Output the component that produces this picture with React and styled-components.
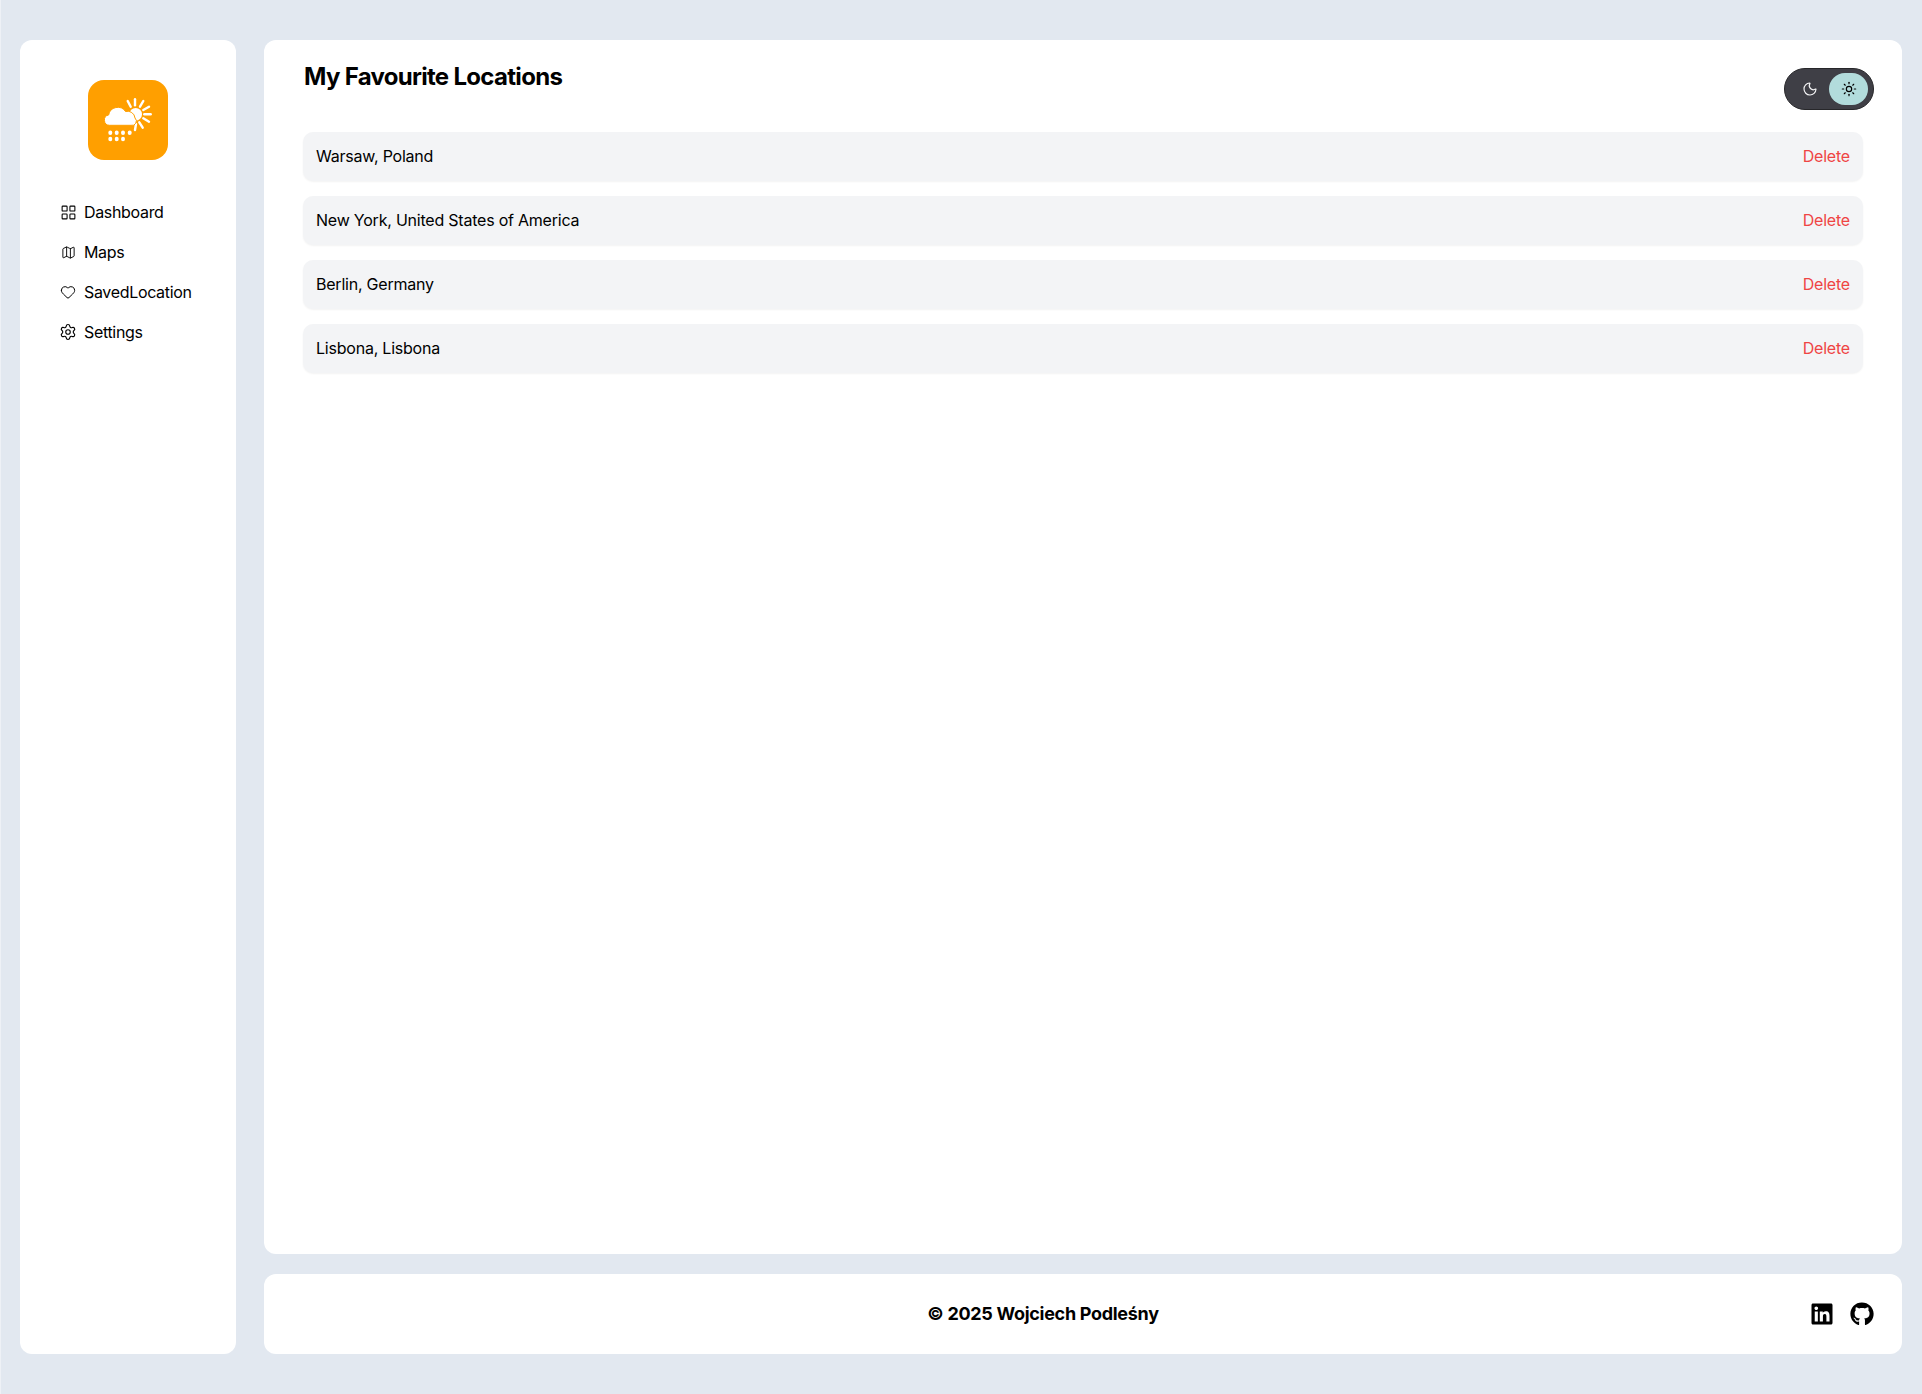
import React from "react";
import styled, { createGlobalStyle } from "styled-components";
import { LayoutGrid, Map, Heart, Settings, Moon, Sun } from "lucide-react";
import { FaGithub, FaLinkedin } from "react-icons/fa";

const GlobalStyle = createGlobalStyle`
  * { box-sizing: border-box; }
  body {
    margin: 0;
    background: #e2e8f0;
    font-family: Inter, "Noto Sans", sans-serif;
    color: #000;
  }
`;

const Page = styled.div`
  display: grid;
  grid-template-columns: 216px 1fr;
  column-gap: 28px;
  height: 1394px;
  padding: 40px 20px;
  box-shadow: inset 1px 0 0 #eef1f6;
`;

const Sidebar = styled.aside`
  display: flex;
  flex-direction: column;
  align-items: center;
  padding-top: 40px;
  background: #fff;
  border-radius: 12px;
`;

const Logo = styled.div`
  width: 80px;
  height: 80px;
  border-radius: 16px;
  background: #ff9f00;
  display: flex;
`;

const Nav = styled.nav`
  align-self: stretch;
  display: flex;
  flex-direction: column;
  gap: 16px;
  margin-top: 40px;
  padding-left: 39px;
`;

const NavItem = styled.a`
  display: flex;
  align-items: center;
  gap: 7px;
  height: 24px;
  font-size: 16px;
  line-height: 24px;
  letter-spacing: -0.33px;
  color: #000;
`;

const NavIcon = styled.span`
  width: 18px;
  display: flex;
  align-items: center;
  justify-content: center;
`;

const Column = styled.div`
  display: flex;
  flex-direction: column;
  gap: 20px;
  min-width: 0;
`;

const Main = styled.main`
  position: relative;
  flex: 1;
  padding: 21px 40px 20px;
  background: #fff;
  border-radius: 12px;
`;

const Title = styled.h1`
  margin: 0 0 39px;
  font-size: 24px;
  line-height: 32px;
  font-weight: 700;
  letter-spacing: -0.7px;
`;

const List = styled.ul`
  list-style: none;
  margin: 0 -1px;
  padding: 0;
  display: flex;
  flex-direction: column;
  gap: 15px;
`;

const Row = styled.li`
  display: flex;
  align-items: center;
  justify-content: space-between;
  height: 49px;
  padding: 0 13px 2px;
  background: #f3f4f6;
  border-radius: 10px;
  box-shadow: 0 1px 2px rgba(0, 0, 0, 0.05);
  font-size: 16px;
  letter-spacing: -0.22px;
`;

const DeleteButton = styled.button`
  border: 0;
  padding: 0;
  background: none;
  color: #ef4444;
  font: inherit;
  letter-spacing: -0.2px;
`;

const Toggle = styled.div`
  position: absolute;
  top: 28px;
  right: 28px;
  width: 90px;
  height: 42px;
  display: flex;
  align-items: center;
  padding: 0 5px;
  background: #3f3f46;
  border: 1px solid #27272a;
  border-radius: 21px;
`;

const ToggleSide = styled.span`
  width: 40px;
  height: 32px;
  display: flex;
  align-items: center;
  justify-content: center;
  border-radius: 16px;
  background: ${(p) => (p.$active ? "#b2dcdc" : "transparent")};
  color: ${(p) => (p.$active ? "#000" : "#f4f4f5")};
  margin-left: ${(p) => (p.$active ? "auto" : "0")};
`;

const Footer = styled.footer`
  position: relative;
  height: 80px;
  display: flex;
  align-items: center;
  justify-content: center;
  padding: 0 80px 2px 0;
  background: #fff;
  border-radius: 12px;
  font-size: 18px;
  font-weight: 700;
  letter-spacing: -0.3px;
`;

const Socials = styled.div`
  position: absolute;
  right: 28px;
  top: 28px;
  display: flex;
  align-items: center;
  gap: 16px;
  color: #000;
`;

const rays = [
  "M39.7 21l3 5.7",
  "M47 19.3v6",
  "M55.3 21l-3.3 5.7",
  "M61 26.7l-5.7 3.3",
  "M62.7 34.3h-6.4",
  "M61 41.7l-5.7-3.4",
  "M54.7 47.7l-3.4-5.4",
  "M47 50l1-6",
];

const WeatherLogo = () => (
  <svg width="80" height="80" viewBox="0 0 80 80" fill="#fff">
    <g stroke="#fff" strokeWidth="2.4" strokeLinecap="round" fill="none">
      {rays.map((d) => (
        <path key={d} d={d} />
      ))}
    </g>
    <circle cx="47.7" cy="34.3" r="6.3" />
    <path
      d="M21.5 45.3A5.2 5.2 0 0 1 20.6 35 9.3 9.3 0 0 1 37.5 31.5 7.5 7.5 0 0 1 47 38 4.3 4.3 0 0 1 43 45.3z"
      stroke="#ff9f00"
      strokeWidth="1"
    />
    {[22.3, 28.7, 35, 41.7].map((x) => (
      <ellipse key={x} cx={x} cy="52.7" rx="2" ry="2.2" />
    ))}
    {[22.3, 28.7, 35].map((x) => (
      <ellipse key={x} cx={x} cy="59" rx="2" ry="2.2" />
    ))}
  </svg>
);

const navItems = [
  { label: "Dashboard", icon: LayoutGrid, size: 17 },
  { label: "Maps", icon: Map, size: 15 },
  { label: "SavedLocation", icon: Heart, size: 16 },
  { label: "Settings", icon: Settings, size: 18 },
];

const locations = [
  "Warsaw, Poland",
  "New York, United States of America",
  "Berlin, Germany",
  "Lisbona, Lisbona",
];

export default function App() {
  return (
    <>
      <GlobalStyle />
      <Page>
        <Sidebar>
          <Logo>
            <WeatherLogo />
          </Logo>
          <Nav>
            {navItems.map(({ label, icon: Icon, size }) => (
              <NavItem key={label}>
                <NavIcon>
                  <Icon size={size} strokeWidth={1.5} />
                </NavIcon>
                {label}
              </NavItem>
            ))}
          </Nav>
        </Sidebar>
        <Column>
          <Main>
            <Title>My Favourite Locations</Title>
            <Toggle>
              <ToggleSide>
                <Moon size={16} strokeWidth={1.75} />
              </ToggleSide>
              <ToggleSide $active>
                <Sun size={16} strokeWidth={1.75} />
              </ToggleSide>
            </Toggle>
            <List>
              {locations.map((name) => (
                <Row key={name}>
                  {name}
                  <DeleteButton>Delete</DeleteButton>
                </Row>
              ))}
            </List>
          </Main>
          <Footer>
            © 2025 Wojciech Podleśny
            <Socials>
              <FaLinkedin size={24} />
              <FaGithub size={24} />
            </Socials>
          </Footer>
        </Column>
      </Page>
    </>
  );
}
